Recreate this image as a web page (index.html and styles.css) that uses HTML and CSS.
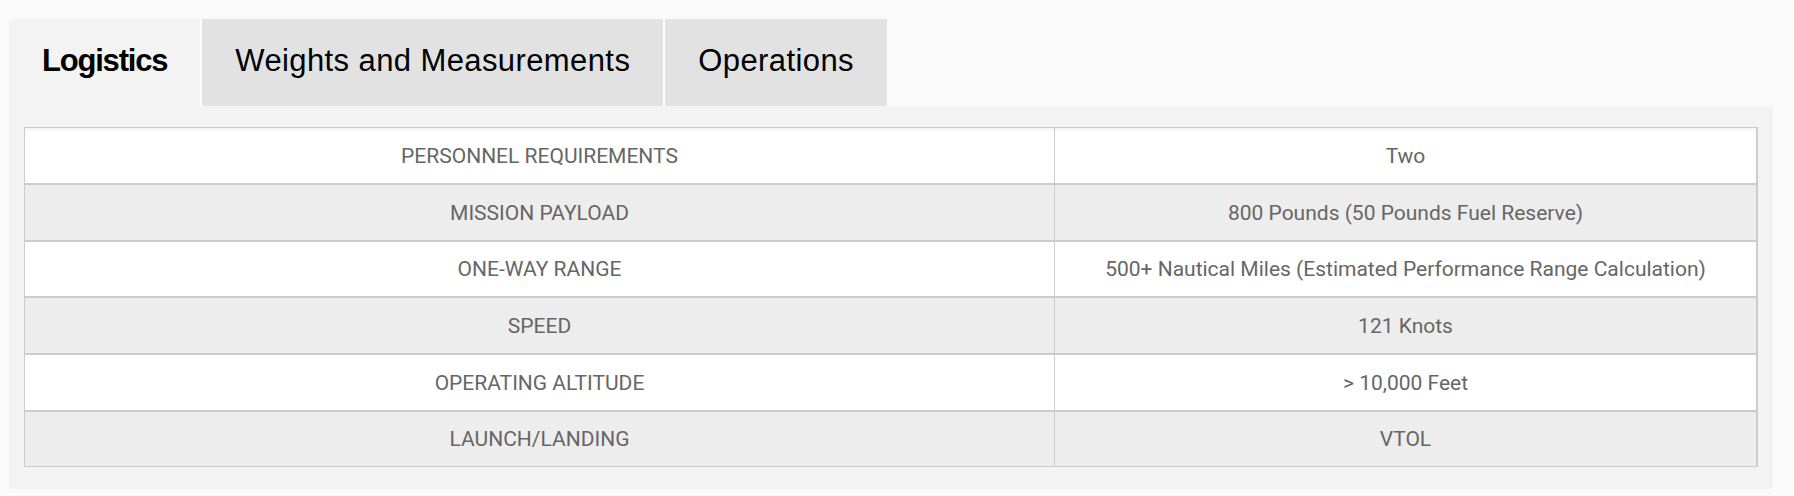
FILE: index.html
```html
<!DOCTYPE html>
<html lang="en">
<head>
<meta charset="utf-8">
<title>Specifications</title>
<link rel="stylesheet" href="styles.css">
</head>
<body>
<div class="specs">
  <div class="tabs">
    <div class="tab tab-active">Logistics</div>
    <div class="tab">Weights and Measurements</div>
    <div class="tab">Operations</div>
  </div>
  <div class="panel">
    <table class="spec-table">
      <colgroup><col class="col-label"><col class="col-value"></colgroup>
      <tbody>
        <tr><td>PERSONNEL REQUIREMENTS</td><td>Two</td></tr>
        <tr><td>MISSION PAYLOAD</td><td>800 Pounds (50 Pounds Fuel Reserve)</td></tr>
        <tr><td>ONE-WAY RANGE</td><td>500+ Nautical Miles (Estimated Performance Range Calculation)</td></tr>
        <tr><td>SPEED</td><td>121 Knots</td></tr>
        <tr><td>OPERATING ALTITUDE</td><td>&gt; 10,000 Feet</td></tr>
        <tr><td>LAUNCH/LANDING</td><td>VTOL</td></tr>
      </tbody>
    </table>
  </div>
</div>
</body>
</html>
```

FILE: styles.css
```css
html, body {
  margin: 0;
  padding: 0;
  background: #fafafa;
}

body {
  padding: 19px 0 0 9px;
}

.specs {
  width: 1764px;
}

.tabs {
  display: flex;
  align-items: stretch;
}

.tab {
  height: 87px;
  box-sizing: border-box;
  padding: 24px 33px 0;
  line-height: 36px;
  font-family: "Liberation Sans", Arial, sans-serif;
  font-size: 31px;
  letter-spacing: 0.4px;
  color: #000;
  background: #e2e2e2;
  border-left: 2px solid #fff;
  white-space: nowrap;
}

.tab-active {
  background: #f3f3f3;
  border-left: 0;
  font-weight: bold;
  letter-spacing: -1.2px;
  padding: 24px 33px 0 33px;
}

.panel {
  background: #f3f3f3;
  padding: 21px 15px 22px;
}

.spec-table {
  width: 100%;
  border-collapse: separate;
  border-spacing: 0;
  border: 1px solid #cccccc;
  border-right-width: 2px;
  table-layout: fixed;
  font-family: Roboto, "Liberation Sans", sans-serif;
  font-size: 21px;
  color: #666666;
}

.col-label {
  width: 1030px;
}

.spec-table td {
  height: 55px;
  padding: 0 10px;
  text-align: center;
  vertical-align: middle;
  background: #ffffff;
  border-bottom: 2px solid #cccccc;
}

.spec-table tr:nth-child(3n) td {
  height: 54px;
}

.spec-table td:first-child {
  border-right: 1px solid #cccccc;
}

.spec-table tr:nth-child(even) td {
  background: #ededed;
}

.spec-table tr:first-child td {
  box-shadow: inset 0 5px 6px -5px rgba(0, 0, 0, 0.10);
}

.spec-table tr:last-child td {
  border-bottom: 0;
}
```
